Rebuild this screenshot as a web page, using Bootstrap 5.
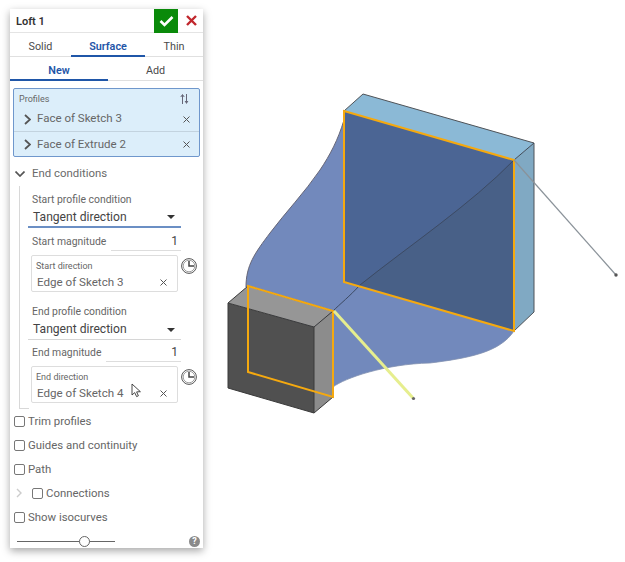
<!DOCTYPE html>
<html lang="en">
  <head>
    <meta charset="UTF-8" />
    <meta name="viewport" content="width=device-width, initial-scale=1.0" />
    <title>Loft 1</title>
    <link href="https://cdn.jsdelivr.net/npm/bootstrap@5.3.3/dist/css/bootstrap.min.css" rel="stylesheet" />
    <style>
      body { background: #fff; overflow: hidden; font-family: Roboto, "Noto Sans", sans-serif; font-size: 11.5px; color: #5f5f5f; }
      .page-wrap { width: 625px; height: 562px; }
      .loft-panel { width: 193px; height: 539px; margin: 9px 0 0 10px; background: #fff; box-shadow: 0 3px 8px rgba(0,0,0,.35); flex: none; }
      .view-3d { width: 422px; height: 562px; flex: none; display: block; }
      .title-row { height: 24px; border-bottom: 1px solid #e4e4e4; }
      .title-text { font-size: 11px; font-weight: 600; color: #333; padding: 3px 0 0 6px; }
      .ok-btn { width: 24px; height: 24px; background: #0a8a0a; margin-right: 3px; }
      .no-btn { width: 20px; height: 24px; margin-right: 2px; }
      .tab-row { height: 24px; border-bottom: 1px solid #e0e0e0; }
      .tab-item { height: 24px; text-align: center; line-height: 22px; padding-top: 3px; color: #4a4a4a; font-size: 10.8px; }
      .tab-item.on { color: #1f56a8; font-weight: 600; border-bottom: 2px solid #1f56a8; }
      .w-solid { width: 61px; } .w-surface { width: 74px; } .w-thin { width: 58px; }
      .w-new { width: 98px; } .w-add { width: 95px; }
      .profile-box { margin: 7px 3px 0 3px; height: 69px; background: #dceefa; border: 1px solid #6f97cc; border-radius: 2px; }
      .profile-head { height: 17px; padding: 4px 10px 0 5px; font-size: 9px; line-height: 13px; color: #666; }
      .profile-row { height: 25px; padding: 1px 9px 0 10px; font-size: 11.5px; color: #666; }
      .profile-row + .profile-row { border-top: 1px solid #c3d3df; height: 25px; }
      .profile-row svg:first-child { margin-right: 6px; }
      .end-head { height: 24px; margin-top: 5px; padding-left: 5px; font-size: 11.4px; color: #6a6a6a; }
      .end-head svg { margin-right: 7px; }
      .end-body { margin-left: 9px; height: 222px; border-left: 1px solid #d8d8d8; position: relative; padding: 4px 0 0 8px; width: 184px; }
      .cap-label { font-size: 10.4px; color: #666; height: 18px; padding-left: 4px; line-height: 20px; }
      .select-row { height: 20px; width: 153px; border-bottom: 1px solid #d6d6d6; padding: 0 6px 0 5px; font-size: 12.1px; color: #444; }
      .select-row.active-sel { border-bottom: 2px solid #6b8fc4; }
      .caret-down { width: 0; height: 0; border-left: 4px solid transparent; border-right: 4px solid transparent; border-top: 4px solid #333; }
      .mag-row { height: 27px; width: 153px; padding-left: 4px; font-size: 10.4px; color: #666; }
      .mag-row.short-row { height: 26px; }
      .mag-name { line-height: 18px; padding-top: 5px; white-space: nowrap; }
      .short-row .mag-name { padding-top: 4px; }
      .mag-val { border-bottom: 1px solid #ddd; height: 23px; padding: 4px 3px 0 0; text-align: right; font-size: 12px; color: #444; line-height: 18px; }
      .short-row .mag-val { height: 22px; padding-top: 3px; }
      .start-val { width: 70px; }
      .end-val { width: 75px; }
      .dir-row { height: 37px; margin-left: 3px; }
      .dir-box { width: 147px; height: 37px; border: 1px solid #ddd; border-radius: 2px; padding: 3px 5px 3px 4px; }
      .dir-label { font-size: 9px; color: #666; line-height: 14px; }
      .dir-val { font-size: 11.6px; color: #666; line-height: 18px; padding-left: 1px; }
      .dir-val svg { margin-right: 5px; }
      .clock-ico { margin: 3px 0 0 3px; }
      .gap-after { height: 10px; }
      .end-tick { width: 10px; height: 1px; background: #d8d8d8; margin-left: 9px; }
      .check-row { height: 24px; padding-left: 4px; font-size: 11.4px; color: #666; }
      .check-row span { padding-top: 1px; }
      .check-row .form-check-input { width: 11px; height: 11px; margin: 0 3px 0 0; border: 1px solid #777; border-radius: 2px; flex: none; }
      .conn-pad { margin-right: 10px; margin-left: 2px; }
      .slider-row { height: 19px; padding: 5px 3px 0 7px; }
      .slider-track { width: 98px; height: 1px; background: #666; position: relative; }
      .slider-thumb { position: absolute; left: 62px; top: -5px; width: 11px; height: 11px; border-radius: 50%; border: 1px solid #666; background: #fff; }
      .help-dot { width: 11px; height: 11px; border-radius: 50%; background: #8a8a8a; color: #fff; font-size: 9px; line-height: 11px; text-align: center; font-weight: 700; }
      .cursor-ico { position: absolute; left: 111px; top: 197px; }
    </style>
  </head>
  <body>
    <div class="page-wrap d-flex align-items-start">
      <div class="loft-panel">
        <div class="title-row d-flex align-items-center">
          <span class="title-text flex-grow-1">Loft 1</span>
          <div class="ok-btn d-flex align-items-center justify-content-center">
            <svg width="15" height="12" viewBox="0 0 15 12"><path d="M1.500 6 L5.500 10 L13.500 2" fill="none" stroke="#fff" stroke-width="2.600"/></svg>
          </div>
          <div class="no-btn d-flex align-items-center justify-content-center">
            <svg width="11" height="11" viewBox="0 0 11 11"><path d="M1 1 L10 10 M10 1 L1 10" fill="none" stroke="#c1272d" stroke-width="2.400"/></svg>
          </div>
        </div>
        <div class="tab-row d-flex">
          <div class="tab-item w-solid">Solid</div>
          <div class="tab-item w-surface on">Surface</div>
          <div class="tab-item w-thin">Thin</div>
        </div>
        <div class="tab-row d-flex">
          <div class="tab-item w-new on">New</div>
          <div class="tab-item w-add">Add</div>
        </div>
        <div class="profile-box">
          <div class="profile-head d-flex justify-content-between">
            <span>Profiles</span>
            <svg width="9" height="12" viewBox="0 0 9 12"><path d="M2.500 11 V2 M0.800 4 L2.500 1.500 L4.200 4" fill="none" stroke="#667" stroke-width="1"/><path d="M6.500 1 V10" stroke="#667" stroke-width="1"/><path d="M4.600 8 L6.500 11 L8.400 8 Z" fill="#667"/></svg>
          </div>
          <div class="profile-row d-flex align-items-center">
            <svg width="7" height="11" viewBox="0 0 7 11"><path d="M1 1 L6 5.500 L1 10" fill="none" stroke="#555" stroke-width="1.800"/></svg>
            <span class="flex-grow-1">Face of Sketch 3</span>
            <svg width="7" height="7" viewBox="0 0 7 7"><path d="M.5 .5 L6.500 6.500 M6.500 .5 L.5 6.500" stroke="#555" stroke-width="1"/></svg>
          </div>
          <div class="profile-row d-flex align-items-center">
            <svg width="7" height="11" viewBox="0 0 7 11"><path d="M1 1 L6 5.500 L1 10" fill="none" stroke="#555" stroke-width="1.800"/></svg>
            <span class="flex-grow-1">Face of Extrude 2</span>
            <svg width="7" height="7" viewBox="0 0 7 7"><path d="M.5 .5 L6.500 6.500 M6.500 .5 L.5 6.500" stroke="#555" stroke-width="1"/></svg>
          </div>
        </div>
        <div class="end-head d-flex align-items-center">
          <svg width="10" height="6" viewBox="0 0 10 6"><path d="M.5 .5 L5 5 L9.500 .5" fill="none" stroke="#555" stroke-width="1.700"/></svg>
          <span>End conditions</span>
        </div>
        <div class="end-body">
          <div class="cap-label">Start profile condition</div>
          <div class="select-row active-sel d-flex align-items-center justify-content-between">
            <span>Tangent direction</span><span class="caret-down"></span>
          </div>
          <div class="mag-row d-flex justify-content-between align-items-start">
            <span class="mag-name">Start magnitude</span>
            <div class="mag-val start-val">1</div>
          </div>
          <div class="dir-row d-flex">
            <div class="dir-box">
              <div class="dir-label">Start direction</div>
              <div class="dir-val d-flex justify-content-between align-items-center">
                <span>Edge of Sketch 3</span>
                <svg width="7" height="7" viewBox="0 0 7 7"><path d="M.5 .5 L6.500 6.500 M6.500 .5 L.5 6.500" stroke="#555" stroke-width="1"/></svg>
              </div>
            </div>
            <svg class="clock-ico" width="16" height="16" viewBox="0 0 16 16"><circle cx="8" cy="8" r="7.400" fill="none" stroke="#555" stroke-width="1"/><circle cx="8" cy="8" r="5.800" fill="none" stroke="#888" stroke-width=".8"/><path d="M8 3 V8 H13" fill="none" stroke="#444" stroke-width="1.500"/></svg>
          </div>
          <div class="gap-after"></div>
          <div class="cap-label">End profile condition</div>
          <div class="select-row d-flex align-items-center justify-content-between">
            <span>Tangent direction</span><span class="caret-down"></span>
          </div>
          <div class="mag-row short-row d-flex justify-content-between align-items-start">
            <span class="mag-name">End magnitude</span>
            <div class="mag-val end-val">1</div>
          </div>
          <div class="dir-row d-flex">
            <div class="dir-box">
              <div class="dir-label">End direction</div>
              <div class="dir-val d-flex justify-content-between align-items-center">
                <span>Edge of Sketch 4</span>
                <svg width="7" height="7" viewBox="0 0 7 7"><path d="M.5 .5 L6.500 6.500 M6.500 .5 L.5 6.500" stroke="#555" stroke-width="1"/></svg>
              </div>
            </div>
            <svg class="clock-ico" width="16" height="16" viewBox="0 0 16 16"><circle cx="8" cy="8" r="7.400" fill="none" stroke="#555" stroke-width="1"/><circle cx="8" cy="8" r="5.800" fill="none" stroke="#888" stroke-width=".8"/><path d="M8 3 V8 H13" fill="none" stroke="#444" stroke-width="1.500"/></svg>
          </div>
          <svg class="cursor-ico" width="11" height="15" viewBox="0 0 11 15"><path d="M1 1 V12 L3.700 9.600 L5.600 13.600 L7.400 12.800 L5.600 8.900 L9.400 8.700 Z" fill="#fff" stroke="#333" stroke-width=".9"/></svg>
        </div>
        <div class="end-tick"></div>
        <div class="check-row d-flex align-items-center">
          <input class="form-check-input" type="checkbox" /><span>Trim profiles</span>
        </div>
        <div class="check-row d-flex align-items-center">
          <input class="form-check-input" type="checkbox" /><span>Guides and continuity</span>
        </div>
        <div class="check-row d-flex align-items-center">
          <input class="form-check-input" type="checkbox" /><span>Path</span>
        </div>
        <div class="check-row d-flex align-items-center">
          <svg class="conn-pad" width="6" height="10" viewBox="0 0 6 10"><path d="M1 1 L5 5 L1 9" fill="none" stroke="#ccc" stroke-width="1.400"/></svg>
          <input class="form-check-input" type="checkbox" /><span>Connections</span>
        </div>
        <div class="check-row d-flex align-items-center">
          <input class="form-check-input" type="checkbox" /><span>Show isocurves</span>
        </div>
        <div class="slider-row d-flex align-items-center justify-content-between">
          <div class="slider-track"><div class="slider-thumb"></div></div>
          <div class="help-dot">?</div>
        </div>
      </div>
      <svg class="view-3d" viewBox="203 0 422 562">
        <!-- lofted surface -->
        <path d="M344 120 C338 140 330 155 320 170 C305 192 285 213 270 233 C255 253 246 265 246 287 L333 387 C345 378 385 364 430 363 C470 358 500 352 514 331 L514 160 Z" fill="#7289bc"/>
        <path d="M344 120 C338 140 330 155 320 170 C305 192 285 213 270 233 C255 253 246 265 246 287" fill="none" stroke="#667" stroke-width="1"/>
        <path d="M333 387 C345 378 385 364 430 363 C470 358 500 352 514 331" fill="none" stroke="#8190b0" stroke-width=".8"/>
        <!-- big box -->
        <path d="M344 111 L514 160 L514 331 L344 282 Z" fill="#4b6594"/>
        <path d="M514 160 C470 205 410 245 360 285 L514 331 Z" fill="#486087"/>
        <path d="M363 94 L534 143 L514 160 L344 111 Z" fill="#8bb9d6"/>
        <path d="M534 143 L534 312 L514 331 L514 160 Z" fill="#80a9c3"/>
        <path d="M344 111 L363 94 L534 143 L534 312 L514 331" fill="none" stroke="#4f5358" stroke-width="1"/>
        <path d="M534 143 L514 160" stroke="#3f4a58" stroke-width="1"/>
        <!-- diagonal inside -->
        <path d="M514 160 C470 205 410 245 360 285 C350 296 340 304 333 311" fill="none" stroke="#3c4a63" stroke-width="1"/>
        <path d="M344 111 L514 160 L514 331 L344 282 Z" fill="none" stroke="#f5a90f" stroke-width="2"/>
        <path d="M514 160 L616 275" stroke="#8a9299" stroke-width="1.200"/>
        <circle cx="616" cy="275" r="1.700" fill="#555"/>
        <!-- small box -->
        <path d="M228 303 L314 327 L314 413 L228 388 Z" fill="#505050"/>
        <path d="M248 286 L333 311 L314 327 L228 303 Z" fill="#969696"/>
        <path d="M333 311 L333 397 L314 413 L314 327 Z" fill="#8c8c8c"/>
        <path d="M228 303 L248 286 L333 311 L333 397 L314 413 L228 388 Z M228 303 L314 327 L333 311 M314 327 V413" fill="none" stroke="#3a3a3a" stroke-width="1"/>
        <path d="M248 286 L333 311 L333 397 L248 372 Z" fill="none" stroke="#f5a90f" stroke-width="2"/>
        <path d="M334 311 L413 398" stroke="#e6ee8e" stroke-width="3"/>
        <circle cx="413.500" cy="398.500" r="1.600" fill="#666"/>
      </svg>
    </div>
    <script src="https://cdn.jsdelivr.net/npm/bootstrap@5.3.3/dist/js/bootstrap.bundle.min.js"></script>
  </body>
</html>
